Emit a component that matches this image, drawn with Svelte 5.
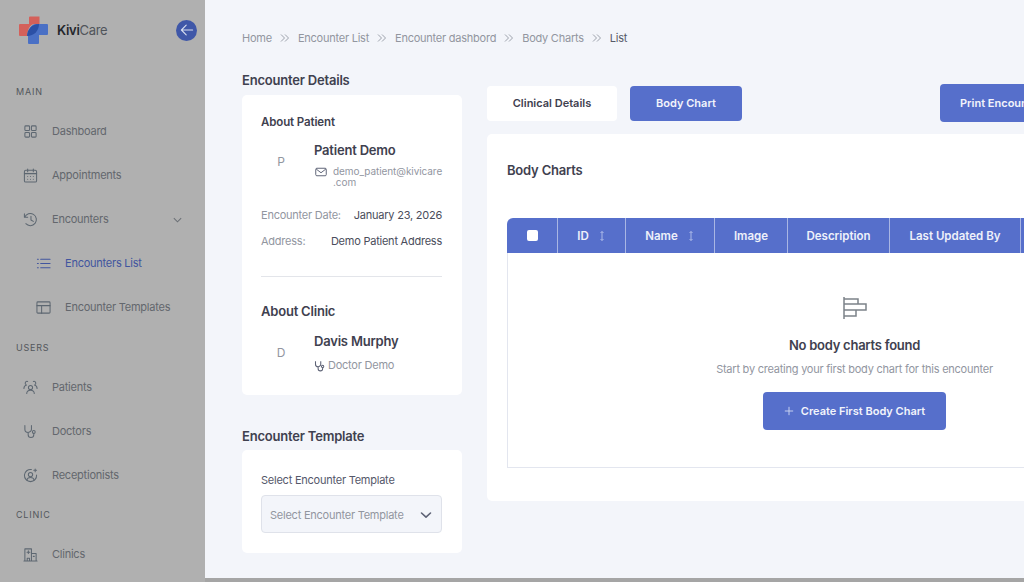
<script>
  const colWidths = [
    { label: 'ID', w: 68, sort: true },
    { label: 'Name', w: 89, sort: true },
    { label: 'Image', w: 73 },
    { label: 'Description', w: 102 },
    { label: 'Last Updated By', w: 131 }
  ];
  const crumbs = ['Home', 'Encounter List', 'Encounter dashbord', 'Body Charts'];
</script>

<div class="page">
  <aside class="sidebar">
    <div class="brand">
      <svg class="logo" viewBox="0 0 30 30" width="30" height="30">
        <path d="M11 2.500a1 1 0 0 1 1-1h9.500V9H17c-4 0-7 3-8 12H2a1 1 0 0 1-1-1V10a1 1 0 0 1 1-1h9z" fill="#d4605a" />
        <path d="M18 9h11a1 1 0 0 1 1 1v9a1 1 0 0 1-1 1h-8v8a1 1 0 0 1-1 1h-9a1 1 0 0 1-1-1V20c1-6 3-11 8-11z" fill="#4a70c5" />
        <path d="M9 21c0-7 5-12 12-12 0 7-5 12-12 12z" fill="#2c50a6" />
      </svg>
      <span class="brand-name"><b>Kivi</b>Care</span>
      <span class="collapse">
        <svg viewBox="0 0 20 20" width="16" height="16" fill="none" stroke="#d7def0" stroke-width="1.400" stroke-linecap="round" stroke-linejoin="round"><path d="M17 10H3M9 4l-6 6 6 6" /></svg>
      </span>
    </div>

    <div class="section first">MAIN</div>
    <div class="item">
      <svg class="ic" viewBox="0 0 16 16"><rect x="2" y="2" width="5" height="5" rx="1" /><rect x="9" y="2" width="5" height="5" rx="1" /><rect x="2" y="9" width="5" height="5" rx="1" /><rect x="9" y="9" width="5" height="5" rx="1" /></svg>
      <span>Dashboard</span>
    </div>
    <div class="item">
      <svg class="ic" viewBox="0 0 16 16"><rect x="1.500" y="2.500" width="13" height="12.500" rx="1.500" /><path d="M1.500 6h13M5 1v3M11 1v3M5 9h.01M8 9h.01M11 9h.01M5 12h.01M8 12h.01M11 12h.01" /></svg>
      <span>Appointments</span>
    </div>
    <div class="item">
      <svg class="ic" viewBox="0 0 16 16"><path d="M1.500 2v3.500H5M1.800 5.500A6.500 6.500 0 1 1 3 12.500M8.500 4.500v4l2.500 1.500" /></svg>
      <span class="grow">Encounters</span>
      <svg class="chev" viewBox="0 0 12 12"><path d="M2 4.500 6 8.500l4-4" /></svg>
    </div>
    <div class="item sub active">
      <svg class="ic" viewBox="0 0 16 16"><path d="M5 3.500h10M5 8h10M5 12.500h10M1.500 3.500h1M1.500 8h1M1.500 12.500h1" /></svg>
      <span>Encounters List</span>
    </div>
    <div class="item sub">
      <svg class="ic" viewBox="0 0 16 16"><rect x="1" y="2" width="14" height="12" rx="1" /><path d="M1 6h14M6 6v8" /></svg>
      <span>Encounter Templates</span>
    </div>

    <div class="section">USERS</div>
    <div class="item">
      <svg class="ic" viewBox="0 0 16 16"><circle cx="8" cy="8" r="2.200" /><path d="M4 14.500c0-2.500 2-3.500 4-3.500s4 1 4 3.500M5 1.500a2 2 0 0 0-1.500 3.700M1 9c0-2 1-3 2.500-3.300M11 1.500a2 2 0 0 1 1.500 3.700M15 9c0-2-1-3-2.500-3.300" /></svg>
      <span>Patients</span>
    </div>
    <div class="item">
      <svg class="ic" viewBox="0 0 16 16"><path d="M2 1.500v4a3.500 3.500 0 0 0 7 0v-4M5.500 9v2.500a3 3 0 0 0 6 0V10" /><circle cx="11.500" cy="8.500" r="1.500" /></svg>
      <span>Doctors</span>
    </div>
    <div class="item">
      <svg class="ic" viewBox="0 0 16 16"><path d="M14.500 7.500A6.500 6.500 0 1 1 9 1.600" /><circle cx="8" cy="7" r="2.300" /><path d="M4 13c.5-2 2-2.800 4-2.800s3.500.8 4 2.800M13 1v3M11.500 2.500h3" /></svg>
      <span>Receptionists</span>
    </div>

    <div class="section clinic">CLINIC</div>
    <div class="item">
      <svg class="ic" viewBox="0 0 16 16"><path d="M1 15h14M2 15V2h7v13M9 7h5v8M4.500 15v-3h2.500v3M5.700 4v3M4.300 5.500h3M11 10h1" /></svg>
      <span>Clinics</span>
    </div>
  </aside>

  <main class="main">
    <nav class="crumbs">
      {#each crumbs as c}
        <span>{c}</span>
        <svg class="sep" viewBox="0 0 10 10" width="10" height="10"><path d="M1 1.500 4.500 5 1 8.500M5 1.500 8.500 5 5 8.500" /></svg>
      {/each}
      <span class="cur">List</span>
    </nav>

    <div class="columns">
      <div class="left">
        <h2 class="title">Encounter Details</h2>
        <section class="card details">
          <h3 class="about">About Patient</h3>
          <div class="person">
            <div class="avatar">P</div>
            <div class="info">
              <div class="pname">Patient Demo</div>
              <div class="mail">
                <svg viewBox="0 0 16 16" width="12" height="12" fill="none" stroke="#5d6275" stroke-width="1.300"><rect x="1" y="3" width="14" height="10" rx="1.500" /><path d="m1.500 4 6.500 5 6.500-5" /></svg>
                <span>demo_patient@kivicare<br />.com</span>
              </div>
            </div>
          </div>
          <div class="kv"><span class="k">Encounter Date:</span><span class="v">January 23, 2026</span></div>
          <div class="kv"><span class="k">Address:</span><span class="v">Demo Patient Address</span></div>
          <hr />
          <h3 class="about clinic-h">About Clinic</h3>
          <div class="person doc">
            <div class="avatar">D</div>
            <div class="info">
              <div class="pname">Davis Murphy</div>
              <div class="role">
                <svg viewBox="0 0 16 16" width="12" height="12" fill="none" stroke="#5d6275" stroke-width="1.400"><path d="M2 1.500v4a3.500 3.500 0 0 0 7 0v-4M5.500 9v2.500a3 3 0 0 0 6 0V10" /><circle cx="11.500" cy="8.500" r="1.500" /></svg>
                <span>Doctor Demo</span>
              </div>
            </div>
          </div>
        </section>

        <h2 class="title tmpl">Encounter Template</h2>
        <section class="card template">
          <div class="lbl">Select Encounter Template</div>
          <div class="select">
            <span>Select Encounter Template</span>
            <svg viewBox="0 0 12 12" width="12" height="12" fill="none" stroke="#5d6275" stroke-width="1.600" stroke-linecap="round" stroke-linejoin="round"><path d="M1.500 4 6 8.200 10.500 4" /></svg>
          </div>
        </section>
      </div>

      <div class="right">
        <div class="tabs">
          <button class="tab">Clinical Details</button>
          <button class="tab on">Body Chart</button>
          <button class="print">Print Encounter</button>
        </div>
        <section class="panel">
          <h2 class="panel-title">Body Charts</h2>
          <div class="table">
            <div class="thead">
              <div class="th check"><span class="box"></span></div>
              {#each colWidths as c}
                <div class="th" style="width:{c.w}px">
                  <span>{c.label}</span>
                  {#if c.sort}
                    <svg class="sort" viewBox="0 0 8 12" width="8" height="12"><path d="M4 1.500v9M2.500 3 4 1.500 5.500 3M2.500 9 4 10.500 5.500 9" /></svg>
                  {/if}
                </div>
              {/each}
              <div class="th rest"></div>
            </div>
            <div class="empty">
              <svg class="empty-ic" viewBox="0 0 26 24" width="26" height="24" fill="none" stroke="#7c8289" stroke-width="1.500"><path d="M2 1v22M2 3h14v5H2M2 8h22v6H2M2 14h12v6H2" /></svg>
              <div class="etitle">No body charts found</div>
              <div class="esub">Start by creating your first body chart for this encounter</div>
              <button class="create">
                <svg viewBox="0 0 12 12" width="10" height="10" fill="none" stroke="#cfd8f2" stroke-width="1.100"><path d="M6 1v10M1 6h10" /></svg>
                <span>Create First Body Chart</span>
              </button>
            </div>
          </div>
        </section>
      </div>
    </div>
  </main>
</div>

<style>
  :global(body) {
    margin: 0;
    overflow: hidden;
    background: #f3f5fa;
    font-family: Inter, "Liberation Sans", sans-serif;
  }
  .page {
    display: flex;
    width: 1024px;
    height: 582px;
    overflow: hidden;
    background: #f3f5fa;
  }
  .sidebar {
    width: 205px;
    flex: none;
    background: #b0b0b0;
    color: #63676d;
    font-size: 11px;
    letter-spacing: -.235px;
  }
  .brand {
    display: flex;
    align-items: center;
    height: 30px;
    padding: 15px 8px 0 18px;
  }
  .logo { flex: none; }
  .brand-name {
    margin-left: 9px;
    font-size: 13px;
    letter-spacing: -.3px;
    color: #50555b;
    flex: 1;
  }
  .brand-name b { color: #25272c; font-weight: 600; }
  .collapse {
    width: 21px;
    height: 21px;
    border-radius: 50%;
    background: #3f57a8;
    display: flex;
    align-items: center;
    justify-content: center;
  }
  .section {
    font-size: 9px;
    letter-spacing: .8px;
    color: #53575c;
    font-weight: 400;
    padding-left: 16px;
    height: 11px;
    line-height: 11px;
    margin-top: 13px;
    margin-bottom: 12px;
  }
  .section.first { margin-top: 41px; }
  .section.clinic { margin-top: 12px; }
  .item {
    display: flex;
    align-items: center;
    height: 44px;
    padding-left: 23px;
    gap: 14px;
    padding-right: 22px;
  }
  .item.sub { padding-left: 36px; }
  .item.active { color: #41559f; }
  .grow { flex: 1; }
  .ic {
    width: 15px;
    height: 15px;
    flex: none;
    fill: none;
    stroke: #5d6771;
    stroke-width: 1.100;
    stroke-linecap: round;
    stroke-linejoin: round;
  }
  .active .ic { stroke: #41559f; }
  .chev {
    width: 11px;
    height: 11px;
    fill: none;
    stroke: #6b7076;
    stroke-width: 1.100;
  }

  .main {
    flex: 1;
    min-width: 0;
    height: 582px;
    padding: 30px 0 0 37px;
    box-sizing: border-box;
    border-bottom: 4px solid #a5a5a5;
    overflow: hidden;
  }
  .crumbs {
    display: flex;
    align-items: center;
    gap: 8px;
    height: 15px;
    font-size: 11px;
    letter-spacing: -.235px;
    color: #92969f;
    white-space: nowrap;
  }
  .sep { fill: none; stroke: #9297a1; stroke-width: .9; flex: none; }
  .cur { color: #565a68; }

  .columns {
    display: flex;
    gap: 25px;
    margin-top: 14px;
  }
  .left { width: 220px; flex: none; }
  .title {
    margin: 13px 0 7px;
    font-size: 13px;
    letter-spacing: -.2px;
    line-height: 16px;
    font-weight: 600;
    color: #3f414f;
  }
  .title.tmpl { margin-top: 33px; margin-bottom: 6px; }
  .card {
    background: #fff;
    border-radius: 5px;
    padding: 20px 20px 20px 19px;
    box-sizing: border-box;
  }
  .details { height: 300px; }
  .template { height: 103px; padding-top: 23px; }
  .about {
    margin: 0;
    font-size: 11.5px;
    letter-spacing: -.12px;
    line-height: 14px;
    font-weight: 600;
    color: #3f414f;
  }
  .person { display: flex; margin-top: 13px; align-items: flex-start; }
  .avatar {
    width: 53px;
    flex: none;
    font-size: 12px;
    color: #92969f;
    display: flex;
    justify-content: center;
    align-items: center;
    height: 39px;
    padding-right: 13px;
    box-sizing: border-box;
  }
  .info { min-width: 0; flex: 1; }
  .pname {
    font-size: 13px;
    letter-spacing: -.2px;
    line-height: 16px;
    font-weight: 600;
    color: #3f414f;
  }
  .mail {
    display: flex;
    gap: 6px;
    margin-top: 8px;
    font-size: 10px;
    letter-spacing: -.07px;
    line-height: 11px;
    color: #92969f;
    white-space: nowrap;
  }
  .mail svg { flex: none; margin-left: 1px; }
  .kv {
    display: flex;
    justify-content: space-between;
    font-size: 11px;
    letter-spacing: -.235px;
    line-height: 15px;
    margin-bottom: 11px;
    white-space: nowrap;
  }
  .person + .kv { margin-top: 20px; }
  .k { color: #92969f; }
  .v { color: #4a4d5b; }
  hr {
    border: 0;
    border-top: 1px solid #e3e5ea;
    margin: 27px 0 0;
  }
  .clinic-h { font-size: 13px; letter-spacing: -.2px; line-height: 16px; margin-top: 26px; }
  .doc { margin-top: 14px; }
  .role {
    display: flex;
    align-items: center;
    gap: 2px;
    margin-top: 9px;
    font-size: 11px;
    letter-spacing: -.235px;
    line-height: 15px;
    color: #92969f;
  }
  .lbl { font-size: 11px; letter-spacing: -.235px; line-height: 14px; color: #55586a; white-space: nowrap; }
  .select {
    margin-top: 8px;
    height: 38px;
    border: 1px solid #dfe2ea;
    border-radius: 4px;
    background: #f3f5fa;
    box-sizing: border-box;
    display: flex;
    align-items: center;
    justify-content: space-between;
    padding: 1px 9px 0 8px;
    font-size: 11px;
    letter-spacing: -.235px;
    color: #92969f;
    white-space: nowrap;
  }

  .right { flex: 1; min-width: 0; margin-top: 25px; }
  .tabs {
    display: flex;
    align-items: center;
    gap: 13px;
    height: 38px;
    white-space: nowrap;
  }
  button {
    font-family: inherit;
    font-weight: 600;
    font-size: 11px;
    border: 0;
    border-radius: 4px;
    flex: none;
    padding: 0;
  }
  .tab { width: 130px; height: 35px; background: #fff; color: #3f414f; }
  .tab.on { width: 112px; background: #566fcb; color: #f2f4fb; }
  .print {
    background: #566fcb;
    color: #f2f4fb;
    width: 160px;
    height: 38px;
    margin-left: 185px;
    text-align: left;
    padding-left: 20px;
  }
  .panel {
    background: #fff;
    margin-top: 12px;
    border-radius: 5px 0 0 5px;
    height: 367px;
    padding: 28px 0 0 20px;
    box-sizing: border-box;
    overflow: hidden;
    width: 540px;
  }
  .panel-title {
    margin: 0;
    font-size: 13px;
    letter-spacing: -.2px;
    line-height: 16px;
    font-weight: 600;
    color: #3f414f;
  }
  .table { margin-top: 40px; width: 560px; }
  .thead {
    display: flex;
    height: 35px;
    background: #566fcb;
    border-radius: 6px 0 0 0;
    color: #eef1fa;
    font-size: 11.5px;
    font-weight: 600;
  }
  .th {
    display: flex;
    align-items: center;
    justify-content: center;
    gap: 9px;
    border-right: 1px solid #a9b6e4;
    box-sizing: border-box;
    flex: none;
  }
  .check { width: 51px; }
  .rest { flex: 1; border: 0; }
  .box { width: 11px; height: 11px; border-radius: 2px; background: #fff; }
  .sort { fill: none; stroke: #b7c3ec; stroke-width: .9; }
  .empty {
    height: 215px;
    border-left: 1px solid #e3e6ef;
    border-bottom: 1px solid #e3e6ef;
    width: 694px;
    box-sizing: border-box;
    display: flex;
    flex-direction: column;
    align-items: center;
    padding-top: 43px;
  }
  .empty-ic { flex: none; }
  .etitle {
    margin-top: 17px;
    font-size: 13px;
    letter-spacing: -.25px;
    line-height: 16px;
    font-weight: 600;
    color: #3f414f;
  }
  .esub {
    margin-top: 9px;
    font-size: 11px;
    letter-spacing: -.235px;
    line-height: 15px;
    color: #92969f;
  }
  .create {
    margin-top: 15px;
    width: 183px;
    height: 38px;
    background: #566fcb;
    color: #f2f4fb;
    display: flex;
    align-items: center;
    justify-content: center;
    gap: 7px;
  }
</style>
